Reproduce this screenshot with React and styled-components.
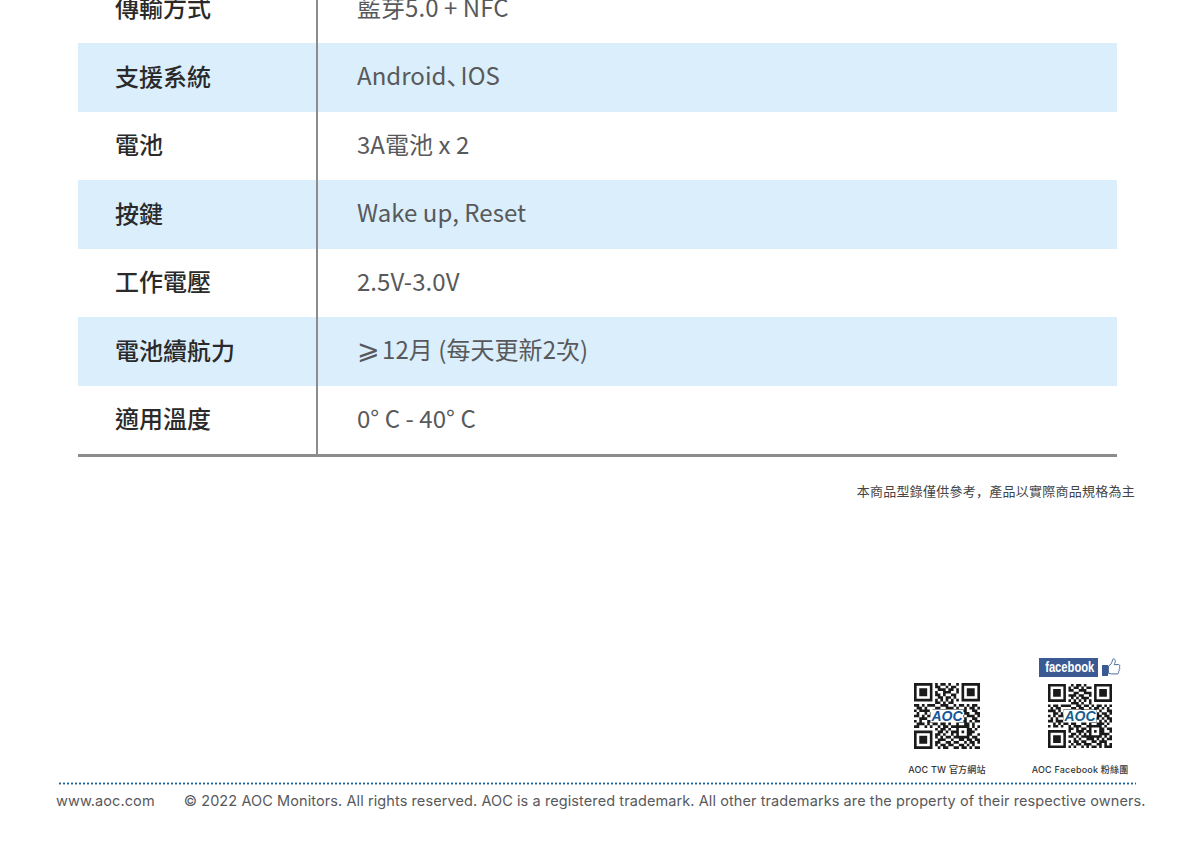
import styled, { createGlobalStyle } from 'styled-components';

const GlobalStyle = createGlobalStyle`
  html, body { margin: 0; padding: 0; background: #fff; }
  body { font-family: "Noto Sans CJK TC", "Noto Sans", sans-serif; }
`;

// QR 1 modules, 25 x 25, centre is covered by the logo
const qrSite = [
  '1111111010110100101111111',
  '1000001011001011001000001',
  '1011101001110110101011101',
  '1011101010011100101011101',
  '1011101011010011001011101',
  '1000001001101101001000001',
  '1111111010101010101111111',
  '0000000011010110000000000',
  '1101011100111001011010110',
  '0110100011001110100101101',
  '1011110100110001011100110',
  '0100101100000000010110011',
  '1101011000000000001011101',
  '0011100100000000010100110',
  '1010011000000000011101011',
  '0111010110110100100110100',
  '1100101001011011111110101',
  '0000000010110100100011010',
  '1111111001101011101011100',
  '1000001011010010100011001',
  '1011101010101101111110110',
  '1011101001110010011011011',
  '1011101011001101100101101',
  '1000001010110110011010100',
  '1111111001011001101101011',
];

const qrFb = [
  '1111111001011010001111111',
  '1000001010110101101000001',
  '1011101011001110001011101',
  '1011101000110011101011101',
  '1011101011101100101011101',
  '1000001001010111001000001',
  '1111111010101010101111111',
  '0000000001110100100000000',
  '1011011110011011010110101',
  '0101100001101100101101010',
  '1110101110010111011010011',
  '0011010000000000110101101',
  '1010111000000000010110110',
  '0101001000000000101101011',
  '1101110000000000011010101',
  '0010101101100110100111010',
  '1011010010111001111110100',
  '0000000011010110100011011',
  '1111111010011101101011001',
  '1000001001101010100011110',
  '1011101011010111111110101',
  '1011101000101001110101011',
  '1011101010110110011011100',
  '1000001001011011100110101',
  '1111111010100101011010111',
];

function QrCode({ modules, size, logoColor }) {
  let d = '';
  modules.forEach((line, y) => {
    [...line].forEach((cell, x) => {
      if (cell === '1') d += `M${x} ${y}h1v1h-1z`;
    });
  });
  return (
    <QrBox $size={size}>
      <svg viewBox="0 0 25 25" width="100%" height="100%">
        <path d={d} fill="#1a1a1a" />
      </svg>
      <QrLogo $color={logoColor}>AOC</QrLogo>
    </QrBox>
  );
}

function Thumb() {
  return (
    <svg width="19" height="19" viewBox="0 0 19 19">
      <rect x="0" y="7" width="6" height="11" fill="#3b5a94" />
      <path
        d="M6.500 8c2.200-1 3.700-3.600 4.100-6.400.2-1.200 2.300-1 2.600.7.200 1.400-.3 3-1 4.300h4.300c1.600 0 1.800 2.100.6 2.500 1 .5.900 2.100-.2 2.400.7.600.5 2-.5 2.300.4.800.1 2.100-1.100 2.100H9.500c-1.100 0-1.800-.6-3-.6z"
        fill="#fff"
        stroke="#3b5a94"
        strokeWidth="0.9"
      />
    </svg>
  );
}

export default function App() {
  const rows = [
    ['傳輸方式', '藍芽5.0 + NFC'],
    ['支援系統', <>Android<Comma>、</Comma>IOS</>],
    ['電池', '3A電池 x 2'],
    ['按鍵', 'Wake up, Reset'],
    ['工作電壓', '2.5V-3.0V'],
    ['電池續航力', <><GreaterEq>⩾</GreaterEq>12月 (每天更新2次)</>],
    ['適用溫度', '0° C - 40° C'],
  ];

  return (
    <>
      <GlobalStyle />
      <Page>
        <SpecTable>
          {rows.map(([label, value], i) => (
            <SpecRow key={label} $shaded={i % 2 === 1}>
              <Label>{label}</Label>
              <Value>{value}</Value>
            </SpecRow>
          ))}
        </SpecTable>
        <Note>本商品型錄僅供參考<NoteComma>，</NoteComma>產品以實際商品規格為主</Note>
        <QrArea>
          <QrColumn>
            <QrCode modules={qrSite} size={66} logoColor="#14539c" />
            <Caption>AOC TW 官方網站</Caption>
          </QrColumn>
          <QrColumn>
            <FbRow>
              <FbBadge><FbText>facebook</FbText></FbBadge>
              <Thumb />
            </FbRow>
            <QrCode modules={qrFb} size={64} logoColor="#14608f" />
            <Caption $gap={16}>AOC Facebook 粉絲團</Caption>
          </QrColumn>
        </QrArea>
        <Dots />
        <Footer>
          <span>www.aoc.com</span>
          <span>© 2022 AOC Monitors. All rights reserved. AOC is a registered trademark. All other trademarks are the property of their respective owners.</span>
        </Footer>
      </Page>
    </>
  );
}

const Page = styled.div`
  width: 1200px;
  height: 848px;
  overflow: hidden;
  position: relative;
  background: #fff;
`;

const SpecTable = styled.div`
  width: 1039px;
  margin: -25.5px 0 0 78px;
  border-bottom: 3px solid #8c8c8c;
`;

const SpecRow = styled.div`
  display: grid;
  grid-template-columns: 240px 1fr;
  height: 68.5px;
  align-items: stretch;
  background: ${(p) => (p.$shaded ? '#daeefc' : '#fff')};
`;

const Label = styled.div`
  display: flex;
  align-items: center;
  padding: 0 0 4px 37px;
  font-size: 24px;
  font-weight: 500;
  color: #2a2a2a;
  border-right: 2px solid #8c8c8c;
`;

const Value = styled.div`
  padding-left: 39px;
  font-size: 24px;
  line-height: 64px;
  letter-spacing: 0.05px;
  font-weight: 400;
  color: #58595b;
`;

const Comma = styled.span`
  font-family: "Noto Sans CJK JP", sans-serif;
  letter-spacing: -10px;
`;

const GreaterEq = styled.span`
  font-size: 27px;
  line-height: 0;
  margin-right: 2px;
`;

const Note = styled.div`
  width: 1135px;
  margin-top: 24px;
  text-align: right;
  font-size: 13px;
  letter-spacing: 0.25px;
  line-height: 20px;
  color: #444;
`;

const NoteComma = styled.span`
  font-family: "Noto Sans CJK JP", sans-serif;
`;

const QrArea = styled.div`
  display: flex;
  justify-content: flex-end;
  align-items: flex-end;
  gap: 35px;
  width: 1129px;
  margin-top: 157px;
`;

const QrColumn = styled.div`
  display: flex;
  flex-direction: column;
  align-items: center;
  width: 98px;
`;

const QrBox = styled.div`
  position: relative;
  width: ${(p) => p.$size}px;
  height: ${(p) => p.$size}px;
`;

const QrLogo = styled.span`
  position: absolute;
  left: 50%;
  top: 50%;
  transform: translate(-50%, -50%);
  padding: 0 1px;
  background: #fff;
  font-family: "Liberation Sans", sans-serif;
  font-size: 14px;
  font-weight: 700;
  font-style: italic;
  line-height: 12px;
  color: ${(p) => p.$color};
`;

const Caption = styled.div`
  margin-top: ${(p) => p.$gap || 15}px;
  font-family: "Inter", "Noto Sans CJK TC", sans-serif;
  font-size: 9px;
  font-weight: 500;
  letter-spacing: 0.2px;
  line-height: 12px;
  white-space: nowrap;
  color: #333;
`;

const FbRow = styled.div`
  display: flex;
  align-items: flex-end;
  gap: 4px;
  margin-bottom: 7px;
`;

const FbBadge = styled.div`
  width: 59px;
  height: 19px;
  background: #3b5a94;
  color: #fff;
  font-family: "Liberation Sans", sans-serif;
  font-size: 14px;
  font-weight: 700;
  line-height: 19px;
  text-align: center;
`;

const FbText = styled.span`
  display: inline-block;
  transform: scaleX(0.8);
`;

const Dots = styled.div`
  width: 1078px;
  height: 3px;
  margin: 6px 0 0 58px;
  background-image: radial-gradient(circle at center, #1a5f9e 1px, transparent 1.2px);
  background-size: 4px 3px;
`;

const Footer = styled.div`
  display: flex;
  gap: 29px;
  margin: 6px 0 0 56px;
  font-family: "Inter", sans-serif;
  font-size: 14.500px;
  letter-spacing: 0.09px;
  line-height: 20px;
  white-space: nowrap;
  color: #58595b;
`;
